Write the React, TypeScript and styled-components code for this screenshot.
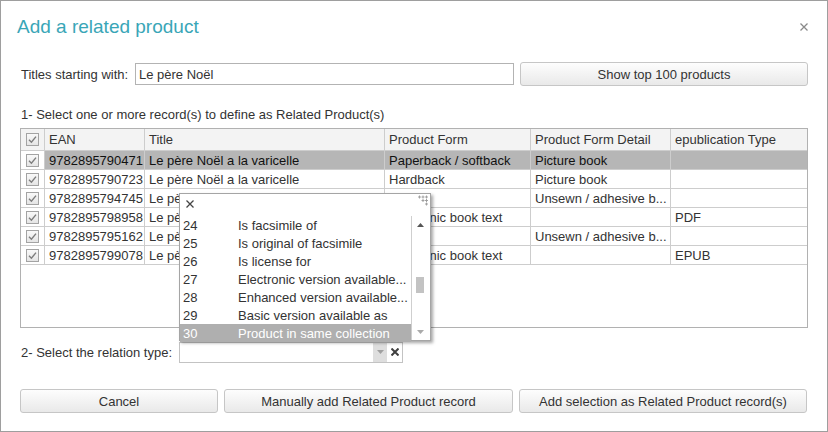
import React from "react";
import styled, { createGlobalStyle } from "styled-components";

const GlobalStyle = createGlobalStyle`
  html, body {
    margin: 0;
    padding: 0;
    width: 828px;
    height: 432px;
    overflow: hidden;
    background: #fff;
  }
  body {
    font-family: "Liberation Sans", Arial, sans-serif;
    font-size: 13px;
    color: #333;
  }
`;

const Dialog = styled.div`
  position: relative;
  box-sizing: border-box;
  width: 828px;
  height: 432px;
  border: 1px solid #9e9e9e;
  background: #fff;
  padding: 0 19px;
  display: flex;
  flex-direction: column;
`;

const Header = styled.div`
  display: flex;
  align-items: center;
  justify-content: space-between;
  height: 52px;
  margin-left: -3px;
`;

const Title = styled.h1`
  margin: 0;
  font-size: 19px;
  font-weight: normal;
  color: #39a6b7;
`;

const CloseButton = styled.button`
  border: 0;
  background: none;
  padding: 0;
  margin-right: -1px;
  width: 10px;
  height: 10px;
  display: flex;
  align-items: center;
  justify-content: center;
  cursor: pointer;
`;

const Row = styled.div<{ $top: number; $height: number }>`
  display: flex;
  align-items: center;
  gap: 6px;
  margin-top: ${(p) => p.$top}px;
  height: ${(p) => p.$height}px;
`;

const Label = styled.label<{ $width: number }>`
  box-sizing: border-box;
  width: ${(p) => p.$width - 6}px;
  flex: none;
  padding-left: 1px;
  white-space: nowrap;
`;

const TextInput = styled.input`
  box-sizing: border-box;
  flex: 1;
  height: 22px;
  border: 1px solid #b3b3b3;
  padding: 0 3px;
  font: inherit;
  color: #333;
  outline: none;
`;

const Button = styled.button<{ $width?: number }>`
  box-sizing: border-box;
  height: 24px;
  width: ${(p) => (p.$width ? `${p.$width}px` : "auto")};
  flex: ${(p) => (p.$width ? "none" : "1")};
  border: 1px solid #c6c6c6;
  border-radius: 3px;
  background: linear-gradient(#fdfdfd, #e9e9e9);
  font: inherit;
  color: #333;
  padding: 0;
  cursor: pointer;
`;

const SectionText = styled.div`
  margin-top: 21px;
  height: 16px;
  line-height: 16px;
  padding-left: 1px;
`;

const Grid = styled.div`
  margin-top: 5px;
  box-sizing: border-box;
  height: 200px;
  border: 1px solid #b1b1b1;
  overflow: hidden;
`;

const GridRow = styled.div<{ $head?: boolean; $selected?: boolean }>`
  display: grid;
  grid-template-columns: 24px 100px 240px 146px 140px 1fr;
  height: ${(p) => (p.$head ? 22 : 19)}px;
  box-sizing: border-box;
  border-bottom: 1px solid #cdcdcd;
  background: ${(p) => (p.$head ? "#f3f3f3" : "#fff")};
  color: ${(p) => (p.$selected ? "#111" : "#333")};
`;

const Cell = styled.div<{ $selected?: boolean }>`
  box-sizing: border-box;
  border-right: 1px solid #cdcdcd;
  padding: 0 4px;
  display: flex;
  align-items: center;
  white-space: nowrap;
  overflow: hidden;
  background: ${(p) => (p.$selected ? "#b6b6b6" : "transparent")};
  &:last-child {
    border-right: 0;
  }
`;

const CheckCell = styled(Cell)`
  justify-content: center;
  padding: 0;
`;

const Select = styled.div`
  box-sizing: border-box;
  width: 224px;
  height: 21px;
  border: 1px solid #c3c3c3;
  display: flex;
  background: #fff;
`;

const SelectValue = styled.div`
  flex: 1;
`;

const SelectArrow = styled.div`
  width: 14px;
  background: #dedede;
  display: flex;
  align-items: center;
  justify-content: center;
`;

const SelectClear = styled.div`
  width: 15px;
  display: flex;
  align-items: center;
  justify-content: center;
`;

const Footer = styled.div`
  display: flex;
  gap: 6px;
  margin-top: 26px;
`;

/* relation type dropdown, opened over the grid */
const Popup = styled.div`
  position: absolute;
  left: 178px;
  top: 192px;
  width: 252px;
  height: 148px;
  box-sizing: border-box;
  border: 1px solid #a5a5a5;
  background: #fff;
  box-shadow: 2px 2px 3px rgba(0, 0, 0, 0.35);
  display: flex;
  flex-direction: column;
`;

const PopupBar = styled.div`
  height: 22px;
  flex: none;
  display: flex;
  align-items: flex-start;
  justify-content: space-between;
  padding: 6px 1px 0 6px;
  box-sizing: border-box;
  position: relative;
`;

const Grip = styled.svg`
  position: absolute;
  right: 1px;
  top: 1px;
`;

const PopupBody = styled.div`
  flex: 1;
  display: flex;
  min-height: 0;
`;

const List = styled.div`
  flex: 1;
  border-right: 1px solid #cfcfcf;
`;

const Item = styled.div<{ $active?: boolean }>`
  display: grid;
  grid-template-columns: 55px 1fr;
  height: 18px;
  align-items: center;
  padding-left: 3px;
  white-space: nowrap;
  overflow: hidden;
  background: ${(p) => (p.$active ? "#afafaf" : "transparent")};
  color: ${(p) => (p.$active ? "#fff" : "#333")};
`;

const Scrollbar = styled.div`
  width: 18px;
  flex: none;
  position: relative;
`;

const ScrollArrow = styled.svg<{ $bottom?: boolean }>`
  position: absolute;
  left: 5px;
  ${(p) => (p.$bottom ? "bottom: 6px;" : "top: 7px;")}
`;

const Thumb = styled.div`
  position: absolute;
  left: 4px;
  top: 61px;
  width: 8px;
  height: 16px;
  background: #c3c3c3;
`;

const CheckBox = () => (
  <svg width="13" height="13" viewBox="0 0 13 13">
    <defs>
      <linearGradient id="cb" x1="0" y1="0" x2="0" y2="1">
        <stop offset="0" stopColor="#fafafa" />
        <stop offset="1" stopColor="#e4e4e4" />
      </linearGradient>
    </defs>
    <rect x="0.5" y="0.5" width="12" height="12" fill="url(#cb)" stroke="#a3a3a3" />
    <path d="M3 6.8 L5.4 9.2 L10 3.6" fill="none" stroke="#7d7d7d" strokeWidth="1.4" />
  </svg>
);

const Cross = ({ size, color, weight }: { size: number; color: string; weight: number }) => (
  <svg width={size} height={size} viewBox={`0 0 ${size} ${size}`}>
    <path
      d={`M0.5 0.5 L${size - 0.5} ${size - 0.5} M${size - 0.5} 0.5 L0.5 ${size - 0.5}`}
      stroke={color}
      strokeWidth={weight}
    />
  </svg>
);

const products = [
  { ean: "9782895790471", title: "Le père Noël a la varicelle", form: "Paperback / softback", detail: "Picture book", epub: "" },
  { ean: "9782895790723", title: "Le père Noël a la varicelle", form: "Hardback", detail: "Picture book", epub: "" },
  { ean: "9782895794745", title: "Le père Noël a la varicelle", form: "", detail: "Unsewn / adhesive b...", epub: "" },
  { ean: "9782895798958", title: "Le père Noël a la varicelle", form: "Electronic book text", detail: "", epub: "PDF" },
  { ean: "9782895795162", title: "Le père Noël a la varicelle", form: "", detail: "Unsewn / adhesive b...", epub: "" },
  { ean: "9782895799078", title: "Le père Noël a la varicelle", form: "Electronic book text", detail: "", epub: "EPUB" },
];

const relations = [
  ["24", "Is facsimile of"],
  ["25", "Is original of facsimile"],
  ["26", "Is license for"],
  ["27", "Electronic version available..."],
  ["28", "Enhanced version available..."],
  ["29", "Basic version available as"],
  ["30", "Product in same collection"],
];

export default function App() {
  return (
    <>
      <GlobalStyle />
      <Dialog>
        <Header>
          <Title>Add a related product</Title>
          <CloseButton>
            <Cross size={8} color="#8a8a8a" weight={1.3} />
          </CloseButton>
        </Header>

        <Row $top={9} $height={24}>
          <Label $width={115}>Titles starting with:</Label>
          <TextInput defaultValue="Le père Noël" />
          <Button $width={288}>Show top 100 products</Button>
        </Row>

        <SectionText>1- Select one or more record(s) to define as Related Product(s)</SectionText>

        <Grid>
          <GridRow $head>
            <CheckCell>
              <CheckBox />
            </CheckCell>
            <Cell>EAN</Cell>
            <Cell>Title</Cell>
            <Cell>Product Form</Cell>
            <Cell>Product Form Detail</Cell>
            <Cell>epublication Type</Cell>
          </GridRow>
          {products.map((p, i) => {
            const sel = i === 0;
            return (
              <GridRow key={p.ean} $selected={sel}>
                <CheckCell>
                  <CheckBox />
                </CheckCell>
                <Cell $selected={sel}>{p.ean}</Cell>
                <Cell $selected={sel}>{p.title}</Cell>
                <Cell $selected={sel}>{p.form}</Cell>
                <Cell $selected={sel}>{p.detail}</Cell>
                <Cell $selected={sel}>{p.epub}</Cell>
              </GridRow>
            );
          })}
        </Grid>

        <Row $top={13} $height={22}>
          <Label $width={159}>2- Select the relation type:</Label>
          <Select>
            <SelectValue />
            <SelectArrow>
              <svg width="7" height="4" viewBox="0 0 7 4">
                <path d="M0 0 L7 0 L3.5 4 Z" fill="#a0a0a0" />
              </svg>
            </SelectArrow>
            <SelectClear>
              <Cross size={8} color="#3f3f3f" weight={2} />
            </SelectClear>
          </Select>
        </Row>

        <Footer>
          <Button $width={198}>Cancel</Button>
          <Button $width={289}>Manually add Related Product record</Button>
          <Button $width={288}>Add selection as Related Product record(s)</Button>
        </Footer>

        <Popup>
          <PopupBar>
            <Cross size={8} color="#444" weight={1.3} />
            <Grip width="12" height="12" viewBox="0 0 12 12">
              {[
                [1, 1], [4.5, 1], [8, 1],
                [8, 4.5], [4.5, 4.5],
                [8, 8],
              ].map(([x, y]) => (
                <path
                  key={`${x}-${y}`}
                  d={`M${x} ${y + 1} h3 M${x + 1.5} ${y - 0.5} v3`}
                  stroke="#9a9a9a"
                  strokeWidth="0.9"
                />
              ))}
            </Grip>
          </PopupBar>
          <PopupBody>
            <List>
              {relations.map(([code, name]) => (
                <Item key={code} $active={code === "30"}>
                  <span>{code}</span>
                  <span>{name}</span>
                </Item>
              ))}
            </List>
            <Scrollbar>
              <ScrollArrow width="7" height="4" viewBox="0 0 7 4">
                <path d="M0 4 L7 4 L3.5 0 Z" fill="#555" />
              </ScrollArrow>
              <Thumb />
              <ScrollArrow $bottom width="7" height="4" viewBox="0 0 7 4">
                <path d="M0 0 L7 0 L3.5 4 Z" fill="#aaa" />
              </ScrollArrow>
            </Scrollbar>
          </PopupBody>
        </Popup>
      </Dialog>
    </>
  );
}
